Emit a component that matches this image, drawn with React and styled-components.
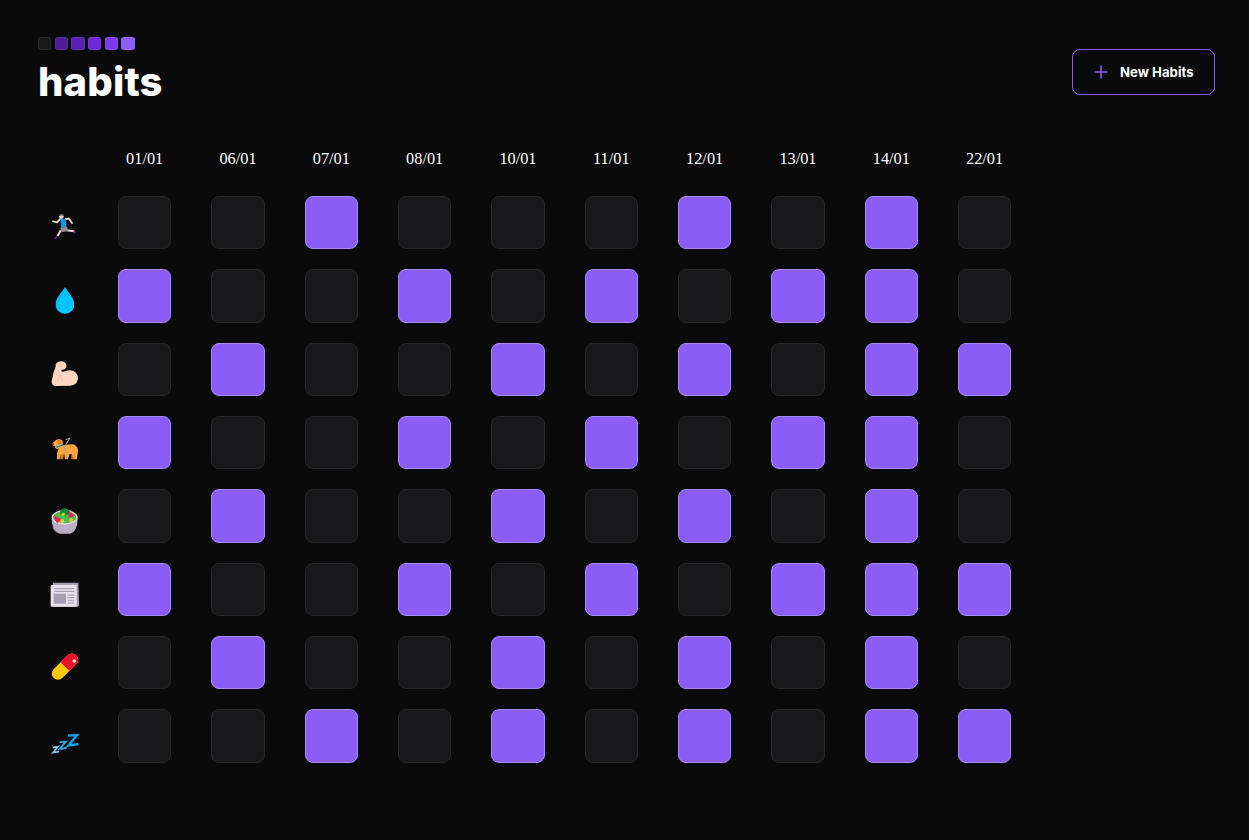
import React from "react";
import styled, { createGlobalStyle } from "styled-components";

const Global = createGlobalStyle`
  html, body { margin: 0; background: #0a0a0a; }
  body { min-height: 840px; }
`;

const Page = styled.main`
  box-sizing: border-box;
  height: 840px;
  padding: 37px 34px 0 38px;
  background: #0a0a0a;
`;

const Header = styled.header`
  display: flex;
  justify-content: space-between;
  align-items: flex-start;
`;

const Brand = styled.div`
  display: flex;
  flex-direction: column;
`;

const Legend = styled.div`
  display: flex;
  gap: 3.33px;
`;

const Swatch = styled.div`
  width: 13.33px;
  height: 13.33px;
  box-sizing: border-box;
  border-radius: 3px;
  background: ${(p) => p.$color};
  border: 1px solid rgba(255, 255, 255, 0.08);
`;

const Title = styled.h1`
  margin: 6px 0 0;
  font-family: Inter, "Liberation Sans", sans-serif;
  font-weight: 800;
  font-size: 40px;
  letter-spacing: 0.15px;
  line-height: 52px;
  color: #fff;
`;

const NewButton = styled.button`
  display: flex;
  align-items: center;
  gap: 11px;
  box-sizing: border-box;
  height: 46px;
  width: 143px;
  margin-top: 12px;
  padding: 0 20px;
  background: transparent;
  border: 1px solid #8b5cf6;
  border-radius: 8px;
  color: #fff;
  font-family: Inter, "Liberation Sans", sans-serif;
  font-weight: 700;
  font-size: 13.2px;
  white-space: nowrap;
`;

const PlusIcon = styled.svg`
  width: 16px;
  height: 16px;
  flex: none;
  color: #8b5cf6;
`;

const Grid = styled.div`
  display: grid;
  grid-template-columns: 40px repeat(10, 53.33px);
  column-gap: 40px;
  row-gap: 20px;
  margin-top: 41.67px;
`;

const Corner = styled.div``;

const DateLabel = styled.div`
  font-family: "Liberation Serif", serif;
  font-size: 16.3px;
  line-height: 18px;
  height: 26px;
  text-align: center;
  color: #fff;
  white-space: nowrap;
`;

const EmojiSlot = styled.div`
  display: flex;
  align-items: center;
  justify-content: center;
  width: 53.33px;
  padding-top: 8px;
  box-sizing: border-box;
`;

const EmojiSvg = styled.svg`
  width: 32px;
  height: 32px;
  flex: none;
  display: block;
`;

const Cell = styled.div`
  box-sizing: border-box;
  height: 53.33px;
  border-radius: 8px;
  background: ${(p) => (p.$on ? "#8b5cf6" : "#18181b")};
  border: 1px solid ${(p) => (p.$on ? "#a78bfa" : "#27272a")};
`;

const Runner = () => (
  <EmojiSvg viewBox="26 18 96 96" fill="none" strokeLinecap="round" strokeLinejoin="round">
    <path d="M60 42 L50 52 L38 49" stroke="#f8d7c6" strokeWidth="5.5" />
    <path d="M76 42 L86 41 L95 54" stroke="#f8d7c6" strokeWidth="5.5" />
    <path d="M60 78 L52 92" stroke="#f8d7c6" strokeWidth="6" />
    <path d="M80 76 L100 79" stroke="#f8d7c6" strokeWidth="6" />
    <path d="M51 95 L44 100" stroke="#5b2a8c" strokeWidth="5" />
    <path d="M102 78 L104 84" stroke="#5b2a8c" strokeWidth="5" />
    <path d="M60 40 L76 41 L78 66 L62 68 Z" fill="#0d9be6" />
    <path d="M60 68 L80 65 L84 78 L64 82 Z" fill="#8f8f8f" />
    <circle cx="63" cy="34" r="7" fill="#f8d7c6" />
    <path d="M55 31 Q60 25 71 29 L69 32 Q62 29 57 33 Z" fill="#2a2a30" />
  </EmojiSvg>
);

const Drop = () => (
  <EmojiSvg viewBox="26 237 96 96">
    <path d="M74 246 C64 264 46 278 46 298 C46 315 58 326 74 326 C90 326 102 315 102 298 C102 278 84 264 74 246 Z" fill="#00c3ff" />
  </EmojiSvg>
);

const Muscle = () => (
  <EmojiSvg viewBox="26 23 96 96">
    <path d="M46 44 Q52 34 66 36 Q80 40 78 52 Q76 61 66 61 L62 64 Q66 69 74 66 Q86 60 98 64 Q114 72 113 88 Q110 107 90 109 L46 110 Q33 108 34 96 Q38 70 46 52 Z" fill="#fdd6c2" />
    <path d="M58 74 L66 94 M52 94 L58 78 M60 42 Q62 48 58 52" stroke="#efb9a0" strokeWidth="2.5" fill="none" />
  </EmojiSvg>
);

const GuideDog = () => (
  <EmojiSvg viewBox="26 242 96 96">
    <path d="M62 300 L60 327 L68 327 L72 304 Z M96 300 L92 327 L100 327 L106 304 Z" fill="#d5832b" />
    <path d="M56 290 L70 284 L96 282 Q110 284 113 298 L112 312 L109 327 L101 327 L98 314 L88 310 L83 327 L74 327 L72 312 L62 312 L58 327 L50 327 L50 308 Z" fill="#f9a63f" />
    <path d="M36 279 L46 270 Q56 264 66 270 Q70 280 64 292 L50 297 Q42 292 44 288 L38 286 Z" fill="#f9a63f" />
    <path d="M50 268 Q60 266 64 274 Q62 284 54 282 Q50 276 50 268 Z" fill="#d5832b" />
    <path d="M48 291 L68 283" stroke="#1590b8" strokeWidth="4" fill="none" />
    <path d="M70 294 L88 264 L76 268 M70 288 L78 308" stroke="#9b9b9b" strokeWidth="3.2" fill="none" />
    <circle cx="38" cy="281" r="2.6" fill="#4a2b18" />
  </EmojiSvg>
);

const Salad = () => (
  <EmojiSvg viewBox="26 26 96 96">
    <path d="M34 70 Q34 106 58 115 L90 115 Q112 106 112 70 Z" fill="#b8aec6" />
    <path d="M36 92 Q46 112 62 115 L52 113 Q38 106 36 92 Z" fill="#8f859f" />
    <ellipse cx="73" cy="66" rx="39" ry="22" fill="#e6e0ea" />
    <ellipse cx="73" cy="66" rx="35" ry="18" fill="#46c04c" />
    <ellipse cx="73" cy="50" rx="14" ry="11" fill="#0e8a34" />
    <path d="M42 60 L62 72 L52 84 Q40 76 42 60 Z" fill="#e8255c" />
    <path d="M86 46 L104 62 L84 68 Z" fill="#e8255c" />
    <circle cx="69" cy="57" r="5" fill="#f9c52b" />
    <circle cx="66" cy="77" r="6" fill="#f9c52b" />
    <circle cx="92" cy="74" r="6" fill="#f9c52b" />
  </EmojiSvg>
);

const Newspaper = () => (
  <EmojiSvg viewBox="26 248 96 96">
    <path d="M38 265 L114 265 L116 334 L110 338 L38 337 Z" fill="#a99fb2" />
    <rect x="31" y="272" width="78" height="65" rx="3" fill="#e6e1ea" />
    <path d="M41 283 H102 M41 291 H102" stroke="#a197ab" strokeWidth="3" />
    <rect x="40" y="298" width="37" height="30" fill="#a79eb3" />
    <path d="M82 302 H102 M82 310 H102 M82 318 H102 M82 326 H102" stroke="#a197ab" strokeWidth="3" />
  </EmojiSvg>
);

const Pill = () => (
  <EmojiSvg viewBox="26 32 96 96" fill="none">
    <path d="M53 100 L95 58" stroke="#ffc90b" strokeWidth="37" strokeLinecap="round" />
    <path d="M95 58 L74 79" stroke="#f1102c" strokeWidth="37" />
    <circle cx="95" cy="58" r="18.5" fill="#f1102c" />
    <circle cx="102" cy="62" r="5.5" fill="#fbe9ea" />
  </EmojiSvg>
);

const Sleep = () => (
  <EmojiSvg viewBox="26 251 96 96" fill="none" strokeLinejoin="miter">
    <path d="M83 286 L110 284 L84 316 L114 311" stroke="#0fa5ec" strokeWidth="7" />
    <path d="M57 306 L77 304 L58 326 L79 323" stroke="#2ea9e8" strokeWidth="5.5" />
    <path d="M37 321 L53 319 L38 337 L56 334" stroke="#7cc6ef" strokeWidth="5" />
  </EmojiSvg>
);

const dates = ["01/01","06/01","07/01","08/01","10/01","11/01","12/01","13/01","14/01","22/01"];
const habits = [
  [Runner, "0010001010"],
  [Drop, "1001010110"],
  [Muscle, "0100101011"],
  [GuideDog, "1001010110"],
  [Salad, "0100101010"],
  [Newspaper, "1001010111"],
  [Pill, "0100101010"],
  [Sleep, "0010101011"],
];
const swatches = ["#18181b","#4c1d95","#5b21b6","#6d28d9","#7c3aed","#8b5cf6"];

export default function App() {
  return (
    <Page>
      <Global />
      <Header>
        <Brand>
          <Legend>
            {swatches.map((c) => <Swatch key={c} $color={c} />)}
          </Legend>
          <Title>habits</Title>
        </Brand>
        <NewButton>
          <PlusIcon viewBox="0 0 16 16" fill="none" stroke="currentColor" strokeWidth="1.6">
            <path d="M8 1.5v13M1.5 8h13" />
          </PlusIcon>
          New Habits
        </NewButton>
      </Header>
      <Grid>
        <Corner />
        {dates.map((d) => <DateLabel key={d}>{d}</DateLabel>)}
        {habits.map(([Icon, row], r) => (
          <React.Fragment key={r}>
            <EmojiSlot><Icon /></EmojiSlot>
            {row.split("").map((v, i) => <Cell key={i} $on={v === "1"} />)}
          </React.Fragment>
        ))}
      </Grid>
    </Page>
  );
}
